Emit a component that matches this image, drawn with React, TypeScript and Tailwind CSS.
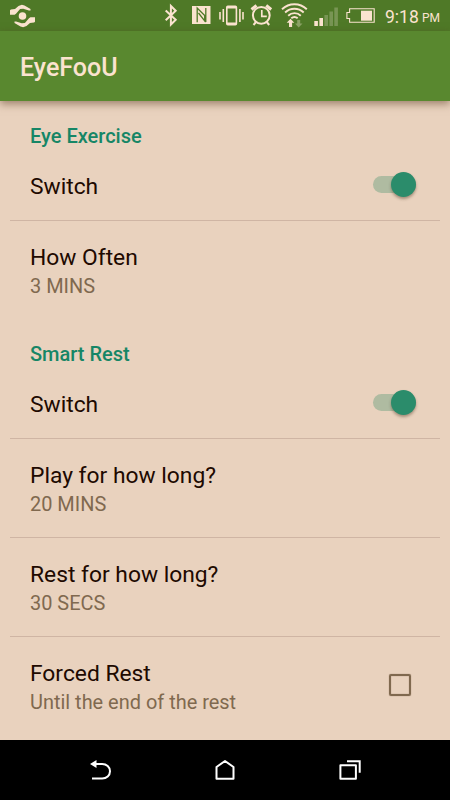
interface PreferenceRowProps {
  title: string
  summary: string
  checkbox?: boolean
  divider?: boolean
}

function EyeLogo() {
  return (
    <svg className="w-[26px] h-[24px]" viewBox="0 0 26 24" fill="#fbe3cf">
      <circle cx="13.5" cy="12" r="3.8" />
      <path d="M1 6.3 1.9 5.5 6 5 9.5 2l3.4-1.3 2.6.8L21.5 5v1.5l-1.6.1-5.7-1.9-3.1.4L7 9.7l-1.4 1H1Z" />
      <path d="m26 17.7-.9.8-4.1.5-3.5 3-3.4 1.3-2.6-.8L5.5 19v-1.5l1.6-.1 5.7 1.9 3.1-.4 4.1-4.6 1.4-1H26Z" />
    </svg>
  )
}

function StatusIcons() {
  return (
    <svg className="w-[216px] h-[31px]" viewBox="160 0 216 31" fill="none" stroke="#fbe3cf">
      {/* bluetooth */}
      <path d="m165.7 10.5 10 9.3-4.8 4.7V6l4.8 4.7-10 9.5" strokeWidth="2" />
      {/* nfc */}
      <path d="M192 6h18.5v18H192Z" fill="#fbe3cf" stroke="none" />
      <path d="M197.2 22.3V8l7.5 7.5v5.3L198.5 13M205.8 8v14" stroke="#4f7927" strokeWidth="1.3" />
      {/* vibrate */}
      <rect x="226.8" y="6.2" width="9.6" height="18.6" rx="1" strokeWidth="1.6" />
      <path d="M227 7.5h9M227 23.5h9" strokeWidth="1.8" />
      <path d="M223.3 9v13M220 12v7.5M239.9 9v13M243 12v7.5" strokeWidth="1.6" />
      {/* alarm */}
      <circle cx="261.3" cy="15.3" r="8.4" strokeWidth="2" />
      <path d="M261.8 10v6.3h5" strokeWidth="1.7" />
      <path d="m251.5 9.5 5-4M271.2 9.5l-5-4" strokeWidth="3" />
      <path d="m256 22-2.5 3M266.7 22l2.5 3" strokeWidth="2" />
      {/* wifi */}
      <path d="M282 9.3c7-6.7 17.8-6.7 24.8 0M285.1 12.5c5.4-5 13.2-5 18.6 0M288.2 15.7c3.6-3.4 9-3.4 12.6 0M291.3 18.3c1.9-1.6 4.5-1.6 6.4 0" strokeWidth="1.9" />
      <path d="m290.5 18.8 3.8 4h-2.2V27H289v-4.2h-2.3Z" fill="#fbe3cf" stroke="none" />
      <path d="m298.7 27.5 3.8-4h-2.3V20h-3v3.5H295Z" fill="#8ba266" stroke="none" />
      {/* signal */}
      <path d="M314.3 21h3.6v5h-3.6Zm5.1-3h3.6v8h-3.6Z" fill="#fbe3cf" stroke="none" />
      <path d="M324.4 15h3.6v11h-3.6Zm5-3.5h3.6V26h-3.6Zm4.9-4h3.6V26h-3.6Z" fill="#789554" stroke="none" />
      {/* battery */}
      <path d="M349.6 8.7h24.6v13.6h-24.6v-3.8h-2.7v-6h2.7Z" strokeWidth="1.1" />
      <path d="M361 10.7h11v10h-11Z" fill="#fbe3cf" stroke="none" />
    </svg>
  )
}

function StatusBar() {
  return (
    <div className="flex h-[31px] items-center bg-[#4f7927] pl-[9px] text-[#fbe3cf]">
      <EyeLogo />
      <div className="ml-[125px] flex items-center">
        <StatusIcons />
        <span className="ml-[9px] w-[37px] pt-[3px] text-[17.5px] leading-[28px] whitespace-nowrap">9:18</span>
        <span className="text-[12px] pt-[5px]">PM</span>
      </div>
    </div>
  )
}

function SectionHeader({ title }: { title: string }) {
  return <h2 className="pl-5 text-[20px] leading-[29px] font-medium text-[#168666]">{title}</h2>
}

function SwitchRow() {
  return (
    <div className="flex h-[70px] items-center justify-between border-b border-[#cfb5a4] pr-6 pl-5">
      <span className="pt-[3px] text-[22.8px] text-[#200900]">Switch</span>
      <div className="mb-[2px] flex h-[17px] w-[43px] items-center justify-end rounded-full bg-[#afbba1]">
        <div className="size-[25px] shrink-0 rounded-full bg-[#2b8c6b] shadow-[0_2px_3px_rgba(60,40,20,0.4)]" />
      </div>
    </div>
  )
}

function PreferenceRow({ title, summary, checkbox = false, divider = true }: PreferenceRowProps) {
  return (
    <div className={`flex h-[99px] items-center justify-between border-b pr-[29px] pl-5 ${divider ? "border-[#cfb5a4]" : "border-transparent"}`}>
      <div className="pt-[3px] pb-px">
        <div className="text-[22.8px] leading-[30px] text-[#200900]">{title}</div>
        <div className="text-[19.95px] leading-[26px] text-[#80694f]">{summary}</div>
      </div>
      {checkbox && <div className="mb-[2px] size-[22px] rounded-[2px] border-2 border-[#80694f] shadow-[0_0_1px_#80694f,inset_0_0_1px_#80694f]" />}
    </div>
  )
}

function NavBar() {
  return (
    <div className="flex h-[60px] items-center justify-center gap-[101px] bg-black">
      <svg className="size-6" viewBox="88 758 24 24" fill="none" stroke="white" strokeWidth="2">
        <path d="M92 778.5h10.2c4.3 0 7.8-3 7.8-7.2s-3.5-7.3-7.8-7.3H95" />
        <path d="m90 764 6.5-4v8Z" fill="white" stroke="none" />
      </svg>
      <svg className="size-6" viewBox="213 758 24 24" fill="none" stroke="white" strokeWidth="2">
        <path d="M216.5 778.7V767l8.5-6 8.5 6v11.7Z" strokeLinejoin="round" />
      </svg>
      <svg className="size-6" viewBox="338 758 24 24" fill="none" stroke="white" strokeWidth="2">
        <path d="M340.4 765.2h15.5v13.5h-15.5Z" strokeLinejoin="round" />
        <path d="M347 761.3h12.7v11.5" />
      </svg>
    </div>
  )
}

export default function App() {
  return (
    <div className="flex h-[800px] w-[450px] flex-col overflow-hidden bg-[#e9d2be] font-[Roboto,sans-serif]">
      <StatusBar />
      <header className="z-10 flex h-[70px] items-center bg-[#59882f] pl-5 pt-[3px] shadow-[0_3px_8px_rgba(80,50,25,0.5)]">
        <h1 className="text-[25px] font-medium text-[#fbe3cf]">EyeFooU</h1>
      </header>
      <main className="h-[639px] px-[10px]">
        <section className="pt-[21px]">
          <SectionHeader title="Eye Exercise" />
          <SwitchRow />
          <PreferenceRow title="How Often" summary="3 MINS" divider={false} />
        </section>
        <section className="pt-5">
          <SectionHeader title="Smart Rest" />
          <SwitchRow />
          <PreferenceRow title="Play for how long?" summary="20 MINS" />
          <PreferenceRow title="Rest for how long?" summary="30 SECS" />
          <PreferenceRow title="Forced Rest" summary="Until the end of the rest" checkbox divider={false} />
        </section>
      </main>
      <NavBar />
    </div>
  )
}
